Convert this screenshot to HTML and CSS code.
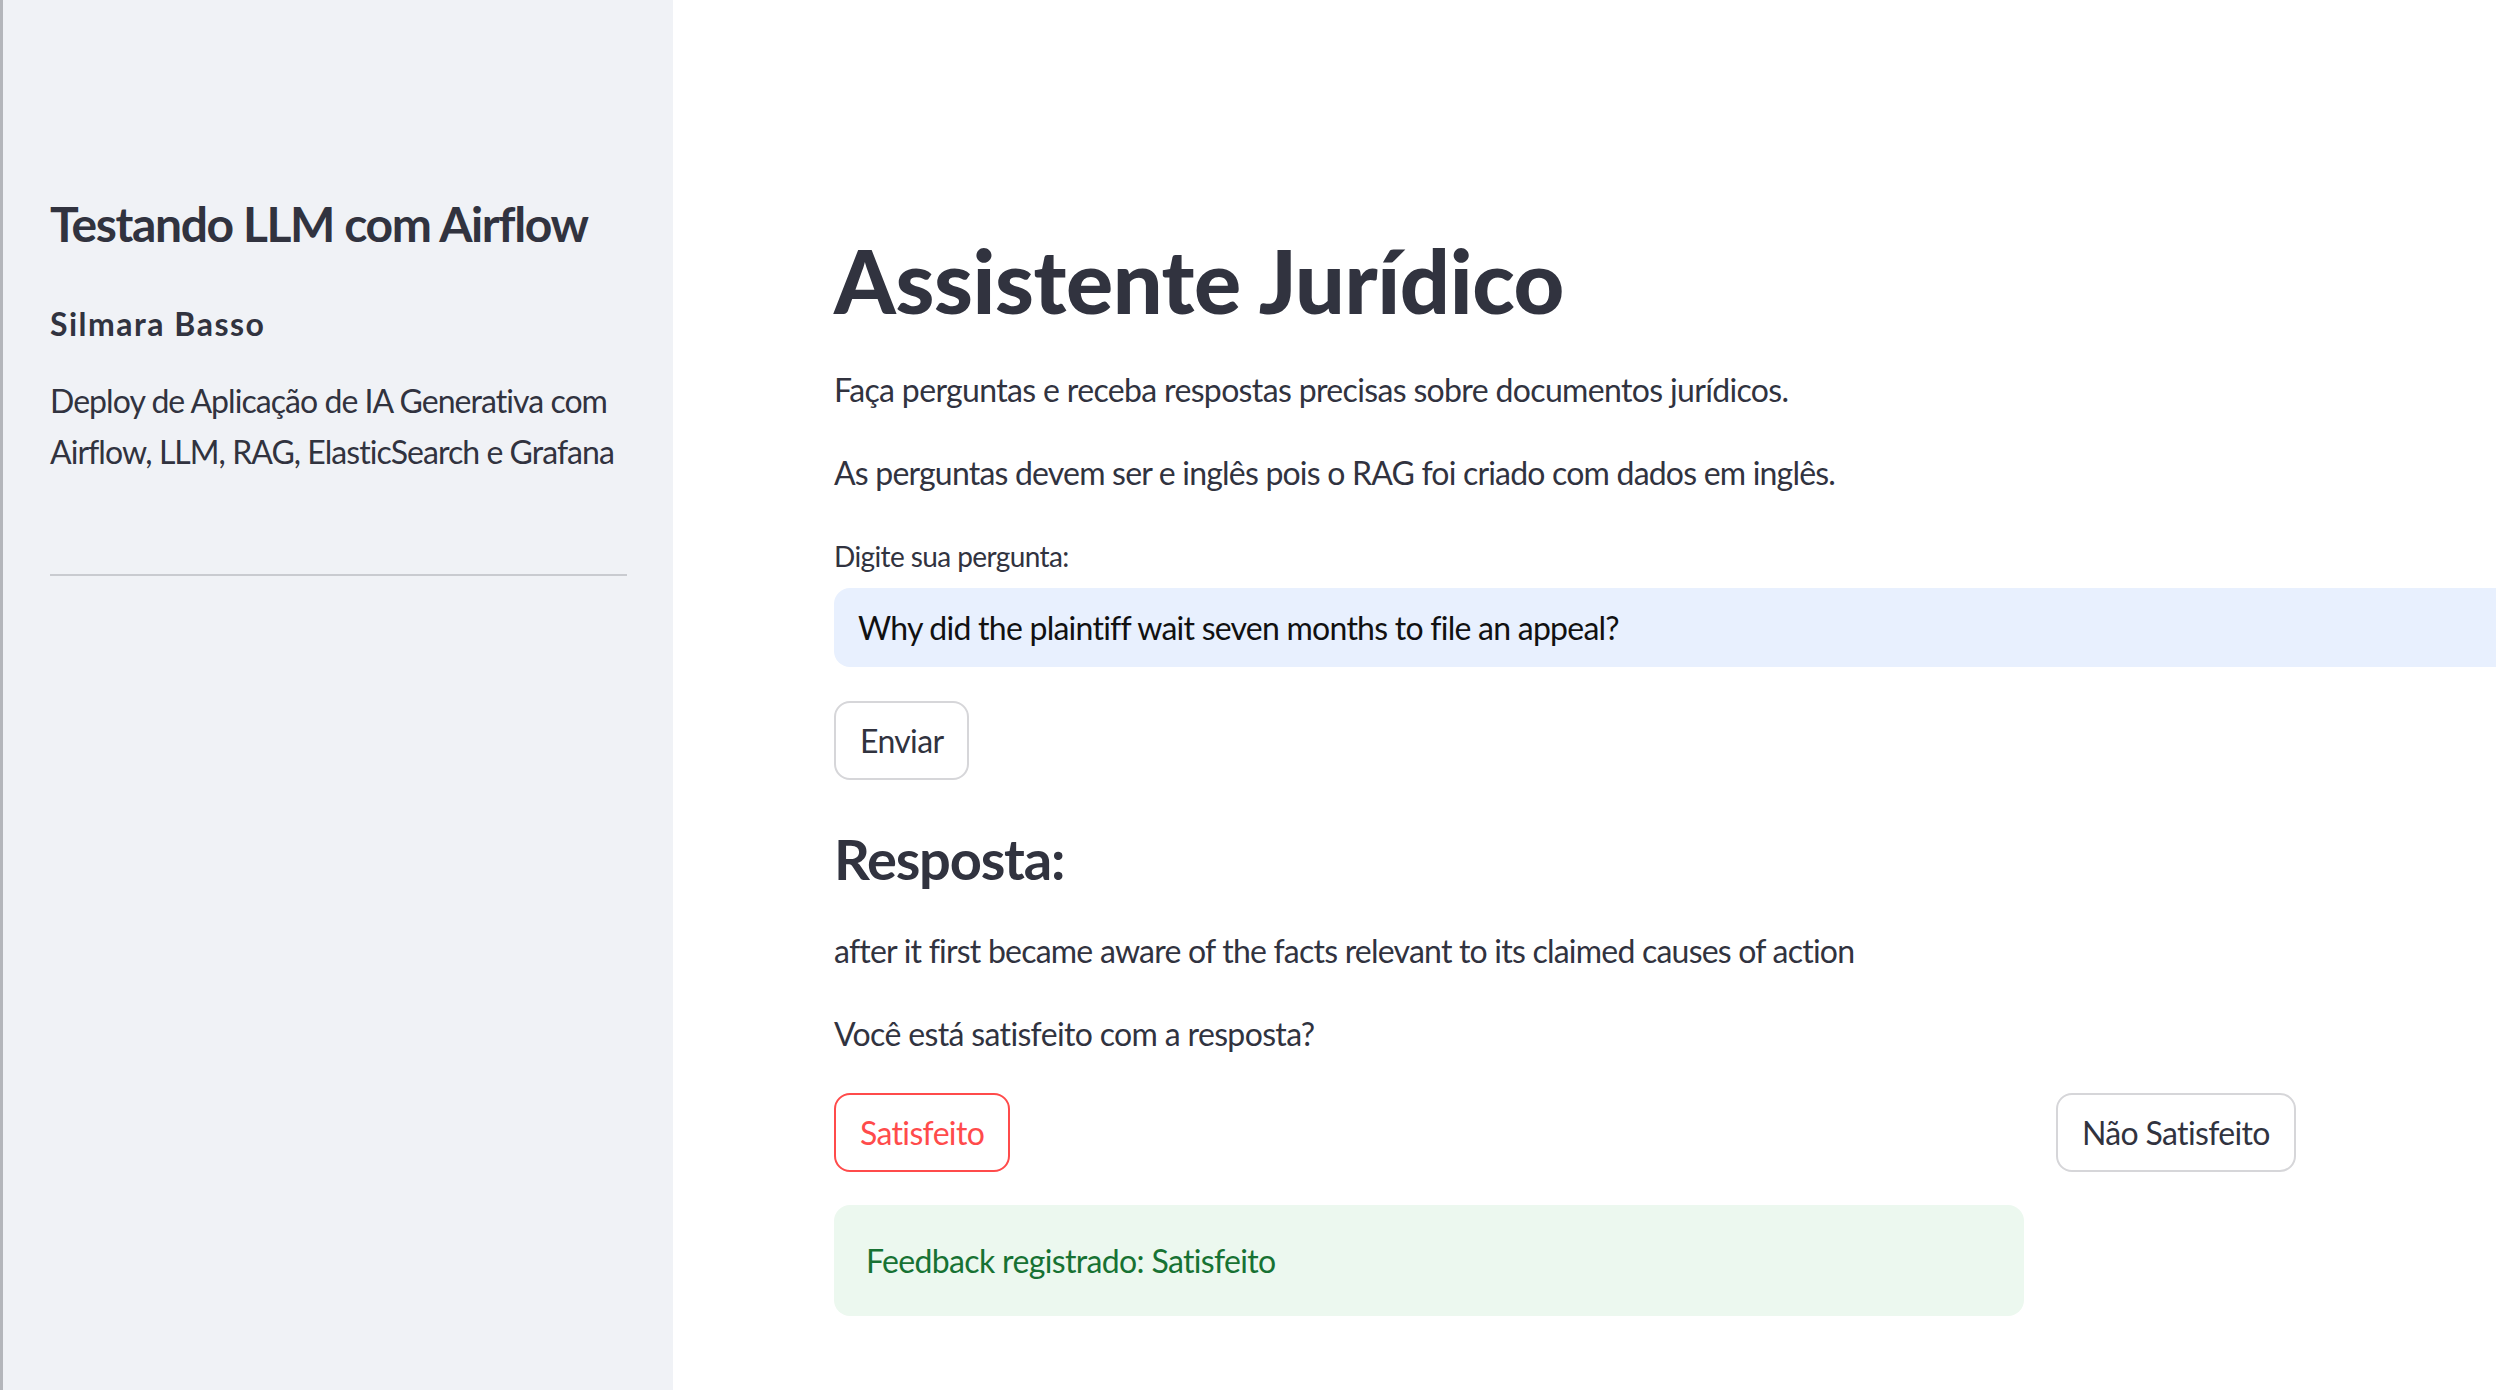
FILE: index.html
```html
<!DOCTYPE html>
<html lang="pt">
<head>
<meta charset="utf-8">
<title>Assistente Jurídico</title>
<link rel="stylesheet" href="styles.css">
</head>
<body>
<div class="app">
  <aside class="sidebar">
    <h1 class="side-title">Testando LLM com Airflow</h1>
    <p class="side-author">Silmara Basso</p>
    <p class="side-desc">Deploy de Aplicação de IA Generativa com Airflow, LLM, RAG, ElasticSearch e Grafana</p>
    <hr class="side-rule">
  </aside>
  <main class="main">
    <div class="block">
      <h1 class="title">Assistente Jurídico</h1>
      <p class="text p1">Faça perguntas e receba respostas precisas sobre documentos jurídicos.</p>
      <p class="text p2">As perguntas devem ser e inglês pois o RAG foi criado com dados em inglês.</p>
      <label class="label">Digite sua pergunta:</label>
      <div class="input">Why did the plaintiff wait seven months to file an appeal?</div>
      <button class="btn send">Enviar</button>
      <h3 class="subtitle">Resposta:</h3>
      <p class="text answer">after it first became aware of the facts relevant to its claimed causes of action</p>
      <p class="text question">Você está satisfeito com a resposta?</p>
      <div class="cols">
        <div class="col">
          <button class="btn btn-active">Satisfeito</button>
          <div class="alert">Feedback registrado: Satisfeito</div>
        </div>
        <div class="col">
          <button class="btn">Não Satisfeito</button>
        </div>
      </div>
    </div>
  </main>
</div>
</body>
</html>
```

FILE: styles.css
```css
html, body {
  margin: 0;
  padding: 0;
  width: 2496px;
  height: 1390px;
  overflow: hidden;
  background: #ffffff;
}
body {
  font-family: "Lato", "Liberation Sans", sans-serif;
  color: #31333f;
  letter-spacing: -0.65px;
}
.app {
  display: flex;
  height: 1390px;
}
.sidebar {
  flex: 0 0 auto;
  width: 673px;
  height: 1390px;
  box-sizing: border-box;
  border-left: 3px solid #b4b6bb;
  background: #f0f2f6;
  padding: 195px 46px 0 47px;
}
.side-title {
  margin: 0;
  font-size: 48px;
  font-weight: 700;
  line-height: 58px;
  letter-spacing: -1.4px;
}
.side-author {
  margin: 45px 0 0;
  font-size: 32px;
  font-weight: 700;
  line-height: 51px;
  letter-spacing: 1.5px;
}
.side-desc {
  margin: 26px 0 0;
  font-size: 32px;
  line-height: 51px;
  letter-spacing: -0.95px;
}
.side-rule {
  margin: 97px 0 0;
  border: 0;
  height: 2px;
  background: #c9cbd0;
}
.main {
  flex: 0 0 auto;
  padding: 227px 0 0 161px;
}
.block {
  width: 2412px;
  display: flex;
  flex-direction: column;
  align-items: flex-start;
}
.title {
  margin: 0;
  font-size: 88px;
  font-weight: 900;
  line-height: 106px;
  letter-spacing: -0.4px;
}
.text {
  margin: 0;
  font-size: 32px;
  line-height: 51px;
}
.p1 { margin-top: 31px; }
.p2 { margin-top: 32px; letter-spacing: -0.8px; }
.label {
  margin-top: 42px;
  font-size: 28px;
  line-height: 32px;
  letter-spacing: -0.6px;
}
.input {
  margin-top: 16px;
  box-sizing: border-box;
  width: 100%;
  height: 79px;
  padding: 0 24px;
  display: flex;
  align-items: center;
  background: #e8f0fe;
  border-radius: 16px;
  font-size: 32px;
  color: #111111;
  letter-spacing: -0.75px;
}
.btn {
  box-sizing: border-box;
  height: 79px;
  padding: 0 24px;
  background: #ffffff;
  border: 2px solid #d6d6d9;
  border-radius: 16px;
  font-family: inherit;
  font-size: 32px;
  letter-spacing: -0.65px;
  color: #31333f;
}
.send {
  margin-top: 34px;
  width: 135px;
}
.btn-active {
  border-color: #ff4b4b;
  color: #ff4b4b;
}
.subtitle {
  margin: 45px 0 0;
  font-size: 56px;
  font-weight: 700;
  line-height: 68px;
  letter-spacing: -1.2px;
}
.answer { margin-top: 32px; letter-spacing: -0.78px; }
.question { margin-top: 32px; }
.cols {
  margin-top: 34px;
  width: 100%;
  display: grid;
  grid-template-columns: 1fr 1fr;
  column-gap: 32px;
}
.col {
  display: flex;
  flex-direction: column;
  align-items: flex-start;
}
.alert {
  margin-top: 33px;
  box-sizing: border-box;
  width: 100%;
  height: 111px;
  padding: 0 32px;
  display: flex;
  align-items: center;
  background: #ecf8ef;
  border-radius: 16px;
  font-size: 32px;
  color: #177233;
}
```
